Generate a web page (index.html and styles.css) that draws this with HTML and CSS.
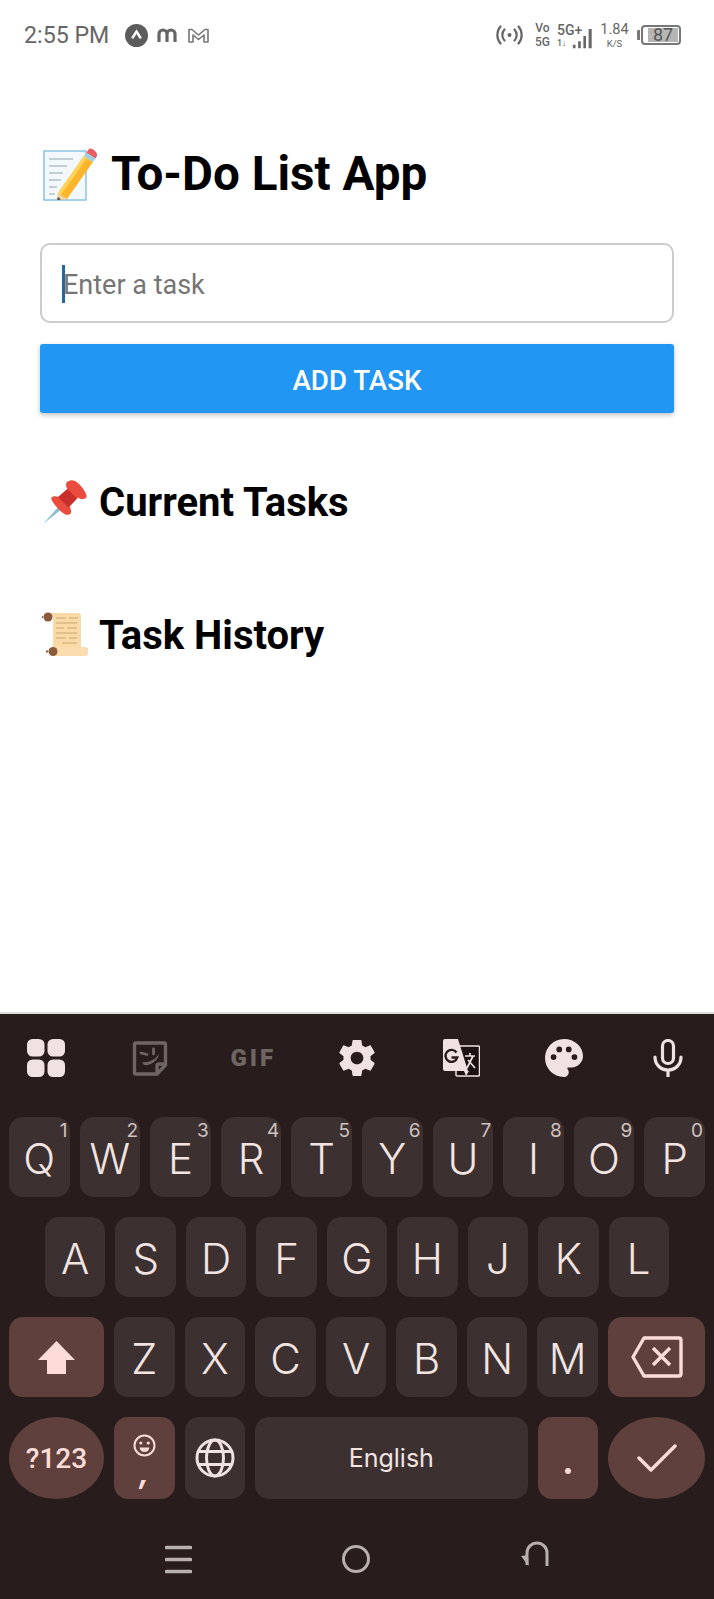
FILE: index.html
```html
<!DOCTYPE html>
<html lang="en">
<head>
    <meta charset="UTF-8">
    <meta name="viewport" content="width=device-width, initial-scale=1.0">
    <title>To-Do List App</title>
    <link rel="stylesheet" href="styles.css">
</head>
<body>
    <div class="status">
        <span class="time">2:55 PM</span>
        <svg class="st-a" viewBox="0 0 24 24"><circle cx="12" cy="12" r="12" fill="#5c5c5c"/><path d="M7.500 15 12 8l4.500 7" fill="none" stroke="#fff" stroke-width="2.600"/></svg>
        <svg class="st-m" viewBox="0 0 20 14"><path d="M2 14V6a3.500 3.500 0 0 1 8 0v8M10 6a3.500 3.500 0 0 1 8 0v8" fill="none" stroke="#666" stroke-width="3.200"/></svg>
        <svg class="st-g" viewBox="0 0 21 15"><path d="M1 14V1.500h3l6.500 5.500L17 1.500h3V14h-4V7l-5.500 4.500L5 7v7z" fill="none" stroke="#777" stroke-width="1.600" stroke-linejoin="round"/></svg>
        <div class="status-right">
            <svg class="st-radio" viewBox="0 0 27 20"><circle cx="13.500" cy="10" r="2" fill="#666"/><path d="M8.500 4.500a8 8 0 0 0 0 11M18.500 4.500a8 8 0 0 1 0 11M4.500 1.500a13 13 0 0 0 0 17M22.500 1.500a13 13 0 0 1 0 17" fill="none" stroke="#666" stroke-width="2.200" stroke-linecap="round"/></svg>
            <div class="st-stack st-vo"><span>Vo</span><span>5G</span></div>
            <div class="st-signal">
                <div class="st-stack st-net"><span class="st-5g">5G+</span><span class="st-arrows">1↓</span></div>
                <svg class="st-bars" viewBox="0 0 24 22"><path d="M1 22v-4h3v4zM7 22v-8h3v8zM13 22V8h3v14zM19 22V0h3.500v22z" fill="#666"/></svg>
            </div>
            <div class="st-stack st-speed"><span class="st-num">1.84</span><span class="st-unit">K/S</span></div>
            <div class="battery"><span class="battery-tip"></span><div class="battery-body"><span class="battery-fill">87</span></div></div>
        </div>
    </div>

    <div class="main">
        <h1 class="title">
            <svg class="title-emoji" viewBox="0 0 54 54">
                <rect x="1" y="4" width="42" height="49" fill="#f3f8fc" stroke="#8cc4e4" stroke-width="1.500"/>
                <path d="M6 12h24M6 19h18M6 26h14M6 33h12M6 40h8M6 47h6" stroke="#93a4ad" stroke-width="1.200"/>
                <path d="M15 46 41 9l9 6-26 37-10 1z" fill="#fbb62c"/>
                <path d="M15 46 41 9l3 2-26 37z" fill="#fdd35c"/>
                <path d="M15 46l9 6-10 1z" fill="#f3d3a6"/>
                <path d="M15 50l3 2.500-4 .5z" fill="#444"/>
                <path d="M41 9l9 6 2.500-3.500-9-6z" fill="#9ad2e4"/>
                <path d="M43.500 5.500l9 6 1.500-2.500c1-3-5-9-8-7z" fill="#ea5a5f"/>
            </svg>
            <span>To-Do List App</span>
        </h1>

        <div class="task-box">
            <input class="task-input" type="text" placeholder="Enter a task">
            <span class="caret"></span>
        </div>
        <button class="add-btn" type="button">ADD TASK</button>

        <h2 class="sub sub-current">
            <svg class="sub-emoji" viewBox="0 0 46 46">
                <path d="M1 45 17 27l3 3z" fill="#8bbfd4"/>
                <path d="M26 2c-2.500 2-2.500 5.500-.500 8l-9 8c-2.500-1-5.500-1-7 .500-2 2.500 8.500 14 13 16.500 3 1.500 6 1 6.500-1.500.500-2-.500-4.500-1.500-6l8.500-9c2 1.500 5.500 2.500 8 .500 2.500-3-4-11-7-14-3-3-8-5-10.500-2.500z" fill="#ea4c3f"/>
                <path d="M25.500 10l9.500 9.500-8.500 9L16 18z" fill="#c9302c"/>
            </svg>
            <span>Current Tasks</span>
        </h2>

        <h2 class="sub sub-history">
            <svg class="sub-emoji" viewBox="0 0 46 46">
                <path d="M8 1h28a3 3 0 0 1 3 3v34H11V6z" fill="#fad9a4"/>
                <path d="M14 6h10M27 6h9M14 11h21M14 16h8M25 16h10M14 21h21M14 26h10M27 26h8M20 31h15" stroke="#c9a878" stroke-width="1.200"/>
                <path d="M10 35h33a3 3 0 0 1 0 9H10z" fill="#fbdcae"/>
                <circle cx="6" cy="5" r="4.500" fill="#8b5a3c"/>
                <path d="M1 5H0" stroke="#8b5a3c" stroke-width="2"/>
                <circle cx="11" cy="39.500" r="4.500" fill="#8b5a3c"/>
                <path d="M6 39.500H4" stroke="#8b5a3c" stroke-width="2"/>
            </svg>
            <span>Task History</span>
        </h2>
    </div>

    <div class="keyboard">
        <div class="toolbar">
            <svg class="tool" viewBox="0 0 38 38" fill="#efe2e0"><rect x="0" y="0" width="17.500" height="17.500" rx="5.500"/><rect x="20.500" y="0" width="17.500" height="17.500" rx="5.500"/><rect x="0" y="20.500" width="17.500" height="17.500" rx="5.500"/><rect x="20.500" y="20.500" width="17.500" height="17.500" rx="5.500"/></svg>
            <svg class="tool" viewBox="0 0 38 38"><path d="M5 4h28a1.500 1.500 0 0 1 1.500 1.500V26L26 35H5a1.500 1.500 0 0 1-1.500-1.500v-28A1.500 1.500 0 0 1 5 4zM34 25h-6a2 2 0 0 0-2 2v8" fill="none" stroke="#6f6664" stroke-width="3.400"/><path d="M10 14l6 1.500M22.500 10v5" fill="none" stroke="#6f6664" stroke-width="2.800" stroke-linecap="round"/><path d="M11 23c6 1 13-2 17-8-1 7-9 12-15 11z" fill="#6f6664"/></svg>
            <span class="tool gif">GIF</span>
            <svg class="tool" viewBox="1.500 1.500 21 21" fill="#efe2e0"><path d="M19.430 12.980c.040-.320.070-.640.070-.980s-.030-.660-.070-.980l2.110-1.650c.190-.150.240-.420.120-.640l-2-3.460c-.120-.220-.390-.300-.610-.220l-2.490 1c-.520-.400-1.080-.730-1.690-.980l-.380-2.650C14.460 2.180 14.250 2 14 2h-4c-.250 0-.460.180-.490.420l-.380 2.650c-.610.250-1.170.590-1.690.980l-2.490-1c-.230-.090-.490 0-.610.220l-2 3.460c-.130.220-.070.490.120.640l2.110 1.650c-.040.320-.070.650-.070.980s.030.660.070.980l-2.110 1.650c-.190.150-.240.420-.120.640l2 3.460c.120.220.390.300.610.220l2.490-1c.520.400 1.080.730 1.690.980l.380 2.650c.030.240.240.420.490.420h4c.250 0 .460-.180.490-.420l.380-2.650c.610-.250 1.170-.590 1.690-.980l2.490 1c.230.090.490 0 .610-.220l2-3.460c.120-.220.070-.490-.120-.640zM12 15.500c-1.930 0-3.500-1.570-3.500-3.500s1.570-3.500 3.500-3.500 3.500 1.570 3.500 3.500-1.570 3.500-3.500 3.500z"/></svg>
            <svg class="tool" viewBox="0 0 38 38">
                <rect x="14" y="7" width="23.500" height="30" rx="1" fill="#1c1213" stroke="#efe2e0" stroke-width="1.500"/>
                <path d="M3 0h13l10 32H3a2 2 0 0 1-2-2V2a2 2 0 0 1 2-2z" fill="#efe2e0"/>
                <path d="M22 32h5l-3 5z" fill="#efe2e0"/>
                <path d="M23 17h10M28 14v3M25 29l6-12M26 21l7 8" fill="none" stroke="#efe2e0" stroke-width="1.700"/>
                <path d="M14.500 13.500a6 6 0 1 0 .800 5H9.500" fill="none" stroke="#281c1d" stroke-width="2.400"/>
            </svg>
            <svg class="tool" viewBox="2 2 20 20" fill="#efe2e0"><path d="M12 2C6.490 2 2 6.490 2 12s4.490 10 10 10c1.380 0 2.500-1.120 2.500-2.500 0-.610-.230-1.200-.640-1.670-.080-.100-.130-.210-.130-.330 0-.280.220-.500.500-.500H16c3.310 0 6-2.690 6-6 0-4.960-4.490-9-10-9zM6.500 13a1.500 1.500 0 1 1 0-3 1.500 1.500 0 0 1 0 3zm3-4a1.500 1.500 0 1 1 0-3 1.500 1.500 0 0 1 0 3zm5 0a1.500 1.500 0 1 1 0-3 1.500 1.500 0 0 1 0 3zm3 4a1.500 1.500 0 1 1 0-3 1.500 1.500 0 0 1 0 3z"/></svg>
            <svg class="tool" viewBox="0 0 38 38"><rect x="13.500" y="1.500" width="11" height="23" rx="5.500" fill="none" stroke="#efe2e0" stroke-width="3.200"/><path d="M6 18c0 8 6 13 13 13s13-5 13-13M19 31v7" fill="none" stroke="#efe2e0" stroke-width="3.200" stroke-linecap="round"/></svg>
        </div>

        <div class="row">
            <div class="key">Q<span class="hint">1</span></div>
            <div class="key">W<span class="hint">2</span></div>
            <div class="key">E<span class="hint">3</span></div>
            <div class="key">R<span class="hint">4</span></div>
            <div class="key">T<span class="hint">5</span></div>
            <div class="key">Y<span class="hint">6</span></div>
            <div class="key">U<span class="hint">7</span></div>
            <div class="key">I<span class="hint">8</span></div>
            <div class="key">O<span class="hint">9</span></div>
            <div class="key">P<span class="hint">0</span></div>
        </div>
        <div class="row row-mid">
            <div class="key">A</div>
            <div class="key">S</div>
            <div class="key">D</div>
            <div class="key">F</div>
            <div class="key">G</div>
            <div class="key">H</div>
            <div class="key">J</div>
            <div class="key">K</div>
            <div class="key">L</div>
        </div>
        <div class="row">
            <div class="key key-mod key-wide">
                <svg class="shift" viewBox="0 0 37 33"><path d="M18.500 0 37 19H28v14H9V19H0z" fill="#fddcd8"/></svg>
            </div>
            <div class="key">Z</div>
            <div class="key">X</div>
            <div class="key">C</div>
            <div class="key">V</div>
            <div class="key">B</div>
            <div class="key">N</div>
            <div class="key">M</div>
            <div class="key key-mod key-wide key-end">
                <svg class="backspace" viewBox="0 0 52 42"><path d="M13 2h35a2 2 0 0 1 2 2v34a2 2 0 0 1-2 2H13L2 21z" fill="none" stroke="#fddcd8" stroke-width="3.400" stroke-linejoin="round"/><path d="M22 12l17 17M39 12 22 29" stroke="#fddcd8" stroke-width="3.400"/></svg>
            </div>
        </div>
        <div class="row row-last">
            <div class="key key-mod key-wide key-round num-key">?123</div>
            <div class="key key-mod key-narrow key-emoji">
                <svg class="smile" viewBox="0 0 23 23"><circle cx="11.500" cy="11.500" r="10" fill="none" stroke="#f6dcd8" stroke-width="2"/><circle cx="7.800" cy="9" r="1.600" fill="#f6dcd8"/><circle cx="15.200" cy="9" r="1.600" fill="#f6dcd8"/><path d="M6.500 13.500h10c-.500 3-2.500 4.500-5 4.500s-4.500-1.500-5-4.500z" fill="#f6dcd8"/></svg>
                <span class="comma">,</span>
            </div>
            <div class="key key-narrow">
                <svg class="globe" viewBox="0 0 40 40"><g fill="none" stroke="#efe2e0" stroke-width="3"><circle cx="20" cy="20" r="18"/><ellipse cx="20" cy="20" rx="8.500" ry="18"/><path d="M4 13.500h32M4 26.500h32"/></g></svg>
            </div>
            <div class="key key-space">English</div>
            <div class="key key-mod key-narrow key-dot"><span class="dot"></span></div>
            <div class="key key-mod key-wide key-end key-round">
                <svg class="check" viewBox="0 0 40 28"><path d="M2 14l12 12L38 2" fill="none" stroke="#fddcd8" stroke-width="3.400" stroke-linecap="round" stroke-linejoin="round"/></svg>
            </div>
        </div>

        <div class="navbar">
            <svg class="nav-menu" viewBox="0 0 27 29"><path d="M1.500 2.500h24M1.500 14.500h24M1.500 26.500h24" stroke="#b8b0ae" stroke-width="3.600" stroke-linecap="round"/></svg>
            <svg class="nav-home" viewBox="0 0 28 28"><circle cx="14" cy="14" r="12.500" fill="none" stroke="#b8b0ae" stroke-width="3"/></svg>
            <svg class="nav-back" viewBox="0 0 30 27"><path d="M7 25V13a10 10 0 0 1 20 0v13" fill="none" stroke="#b8b0ae" stroke-width="3"/><path d="M1 16l7-1 .500 11z" fill="#b8b0ae"/></svg>
        </div>
    </div>
</body>
</html>
```

FILE: styles.css
```css
* {
    box-sizing: border-box;
}

html, body {
    margin: 0;
    height: 100%;
}

body {
    width: 714px;
    height: 1599px;
    overflow: hidden;
    display: flex;
    flex-direction: column;
    background: #fff;
    font-family: Roboto, "Liberation Sans", sans-serif;
}

/* status bar */
.status {
    height: 70px;
    flex: none;
    display: flex;
    align-items: center;
    padding: 0 33px 0 24px;
    color: #666;
}

.time {
    font-size: 23.200px;
    width: 101px;
}

.st-a {
    width: 23px;
    height: 23px;
    margin-right: 9px;
}

.st-m {
    width: 20px;
    height: 14px;
    margin-right: 11px;
}

.st-g {
    width: 21px;
    height: 15px;
}

.status-right {
    margin-left: auto;
    display: flex;
    align-items: center;
}

.st-radio {
    width: 27px;
    height: 20px;
    margin-right: 12px;
}

.st-stack {
    display: flex;
    flex-direction: column;
    align-items: center;
    font-size: 12px;
    font-weight: 500;
    line-height: 14px;
}

.st-vo {
    width: 15px;
    margin-right: 7px;
}

.st-signal {
    display: flex;
    align-items: flex-end;
    width: 36px;
    margin-right: 9px;
}

.st-net {
    align-items: flex-start;
    width: 25px;
    flex: none;
}

.st-5g {
    font-size: 14px;
    line-height: 16px;
}

.st-arrows {
    font-size: 9px;
    line-height: 11px;
}

.st-bars {
    width: 21px;
    height: 21px;
    flex: none;
    margin-left: -10px;
}

.st-speed {
    width: 25px;
    margin-right: 10px;
    font-weight: 400;
}

.st-num {
    font-size: 14.500px;
    line-height: 17px;
}

.st-unit {
    font-size: 9.500px;
    line-height: 11px;
}

.battery {
    display: flex;
    align-items: center;
}

.battery-tip {
    width: 3px;
    height: 10px;
    margin-right: 1px;
    background: #777;
    border-radius: 1px 0 0 1px;
}

.battery-body {
    width: 40px;
    height: 20px;
    border: 2px solid #777;
    border-radius: 4px;
    padding: 1px;
    display: flex;
    justify-content: flex-end;
}

.battery-fill {
    width: 30px;
    background: #b5b5b5;
    color: #555;
    font-size: 18px;
    line-height: 14px;
    text-align: center;
}

/* app area */
.main {
    flex: 1;
    padding: 75px 40px 0;
}

.title {
    margin: 0 0 42px;
    padding-top: 2px;
    display: flex;
    align-items: center;
    height: 56px;
    font-size: 47.600px;
    font-weight: 700;
    color: #000;
}

.title-emoji {
    width: 54px;
    height: 54px;
    margin-left: 3px;
    margin-right: 14px;
}

.task-box {
    position: relative;
}

.task-input {
    display: block;
    width: 100%;
    height: 80px;
    padding: 4px 21px 0;
    border: 2px solid #ccc;
    border-radius: 10px;
    outline: none;
    font-family: inherit;
    font-size: 27px;
}

.task-input::placeholder {
    color: #757575;
    opacity: 1;
}

.caret {
    position: absolute;
    left: 22px;
    top: 22px;
    width: 3px;
    height: 38px;
    background: #1b6aa5;
}

.add-btn {
    display: block;
    width: 100%;
    height: 69px;
    margin-top: 21px;
    padding-top: 4px;
    border: 0;
    border-radius: 3px;
    background: #2196f3;
    color: #fff;
    font-family: inherit;
    font-size: 27.700px;
    font-weight: 500;
    box-shadow: 0 2px 5px rgba(0, 0, 0, 0.25);
}

.sub {
    margin: 0;
    display: flex;
    align-items: center;
    height: 48px;
    font-size: 40px;
    font-weight: 700;
    color: #000;
}

.sub-current {
    margin-top: 65px;
}

.sub-history {
    margin-top: 85px;
}

.sub-emoji {
    width: 46px;
    height: 46px;
    margin-left: 2px;
    margin-right: 11px;
}

/* keyboard */
.keyboard {
    flex: none;
    height: 587px;
    background: #281c1d;
    border-top: 2px solid #ddd;
    display: flex;
    flex-direction: column;
    color: #f2e4e1;
    font-family: Inter, Roboto, sans-serif;
}

.toolbar {
    height: 103px;
    flex: none;
    padding: 0 27px 16px;
    display: flex;
    align-items: center;
    justify-content: space-between;
}

.tool {
    width: 38px;
    height: 38px;
    flex: none;
}

.gif {
    display: flex;
    align-items: center;
    justify-content: center;
    color: #6f6664;
    font-family: Roboto, sans-serif;
    font-size: 24px;
    font-weight: 900;
    letter-spacing: 3px;
    white-space: nowrap;
}

.row {
    height: 80px;
    flex: none;
    display: flex;
    gap: 10px;
    padding: 0 9px;
    margin-bottom: 20px;
}

.row-mid {
    padding: 0 45px;
}

.row-last {
    height: 82px;
    margin-bottom: 0;
}

.key {
    flex: 1 1 0;
    position: relative;
    display: flex;
    align-items: center;
    justify-content: center;
    background: #3d3030;
    border-radius: 14px;
    font-size: 42px;
    font-weight: 350;
    padding-top: 2px;
}

.hint {
    position: absolute;
    top: 2px;
    right: 2px;
    font-size: 19px;
    font-weight: 400;
    color: #cfc2bf;
}

.key-mod {
    background: #5f403c;
    color: #fddcd8;
}

.key-wide {
    flex: none;
    width: 95px;
    padding-top: 0;
}

.key-end {
    width: 97px;
}

.key-narrow {
    flex: none;
    width: 60.500px;
    padding-top: 0;
}

.key-round {
    border-radius: 50%;
}

.num-key {
    font-family: Roboto, sans-serif;
    font-size: 28px;
    font-weight: 500;
}

.key-emoji {
    flex-direction: column;
    padding-top: 4px;
}

.smile {
    width: 23px;
    height: 23px;
}

.comma {
    font-size: 30px;
    font-weight: 700;
    line-height: 30px;
    font-style: italic;
}

.globe {
    width: 40px;
    height: 40px;
}

.key-space {
    flex: 1 1 0;
    font-size: 25px;
    font-weight: 400;
    padding-top: 0;
}

.key-dot {
    align-items: flex-end;
    padding-bottom: 25px;
}

.dot {
    width: 6px;
    height: 6px;
    border-radius: 50%;
    background: #f6dcd8;
}

.shift {
    width: 37px;
    height: 33px;
}

.backspace {
    width: 52px;
    height: 42px;
}

.check {
    width: 40px;
    height: 28px;
}

.navbar {
    flex: 1;
    display: flex;
    align-items: center;
    padding: 20px 164px 0 165px;
    justify-content: space-between;
}

.nav-menu {
    width: 27px;
    height: 29px;
}

.nav-home {
    width: 28px;
    height: 28px;
}

.nav-back {
    width: 30px;
    height: 27px;
    margin-top: -11px;
}
```
